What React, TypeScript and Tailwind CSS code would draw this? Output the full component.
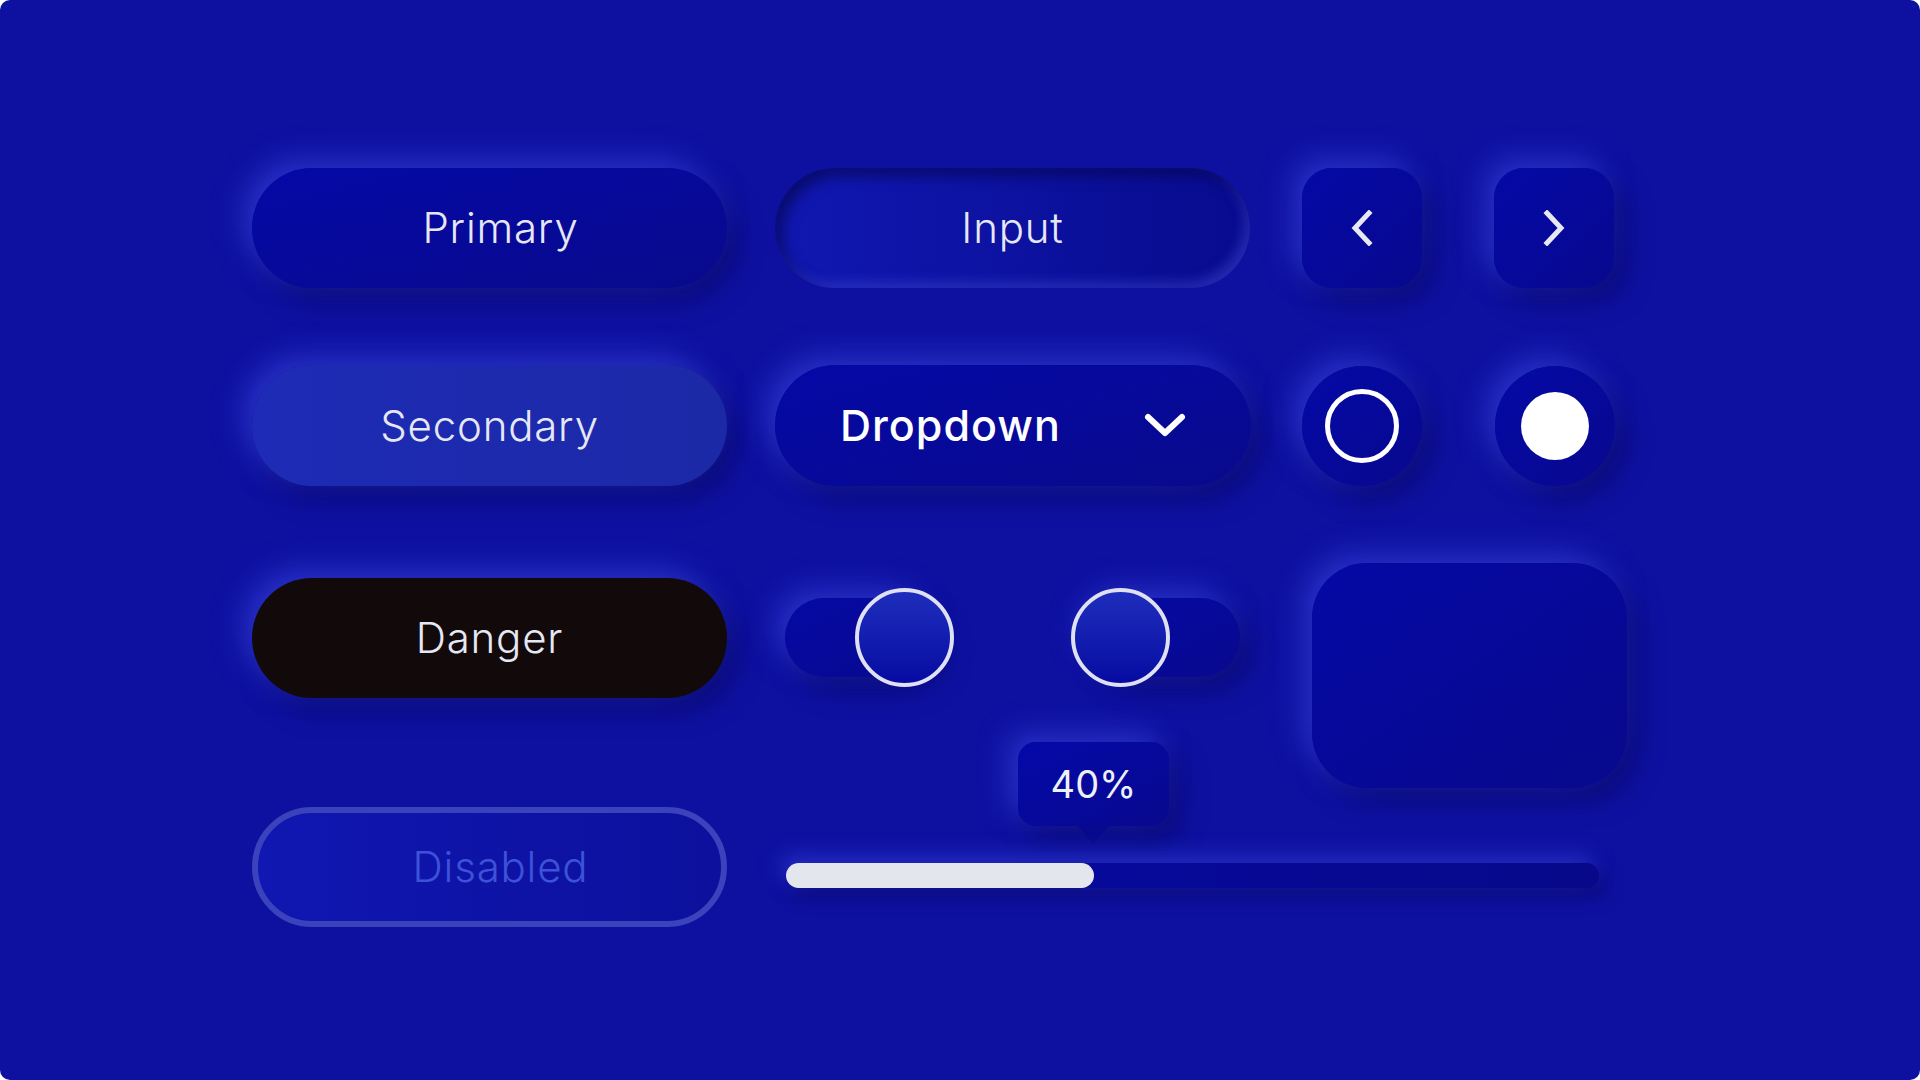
import React from "react";

const raised =
  "shadow-[-10px_-10px_28px_rgba(60,72,230,0.55),10px_12px_26px_rgba(8,8,90,0.55)]";
const label = "text-[42px] leading-none font-light tracking-[0.8px] text-[#e6e7f4]";

function ChevronLeft() {
  return (
    <svg width="24" height="36" viewBox="0 0 24 36" fill="none">
      <polyline points="19,3 5,18 19,33" stroke="#e8e8f2" strokeWidth="5" strokeLinecap="square" />
    </svg>
  );
}

function ChevronRight() {
  return (
    <svg width="24" height="36" viewBox="0 0 24 36" fill="none">
      <polyline points="5,3 19,18 5,33" stroke="#e8e8f2" strokeWidth="5" strokeLinecap="square" />
    </svg>
  );
}

function Toggle({ knobLeft }: { knobLeft: number }) {
  return (
    <div className={`relative h-[79px] w-[150px] rounded-full bg-gradient-to-br from-[#0609a4] to-[#07098e] ${raised}`}>
      <div
        className="absolute top-[-10px] h-[99px] w-[99px] rounded-full border-4 border-[#dfe0f2] bg-gradient-to-b from-[#1e2cbc] to-[#0709a2]"
        style={{ left: knobLeft }}
      />
    </div>
  );
}

export default function App() {
  return (
    <div className="bg-white" style={{ fontFamily: "Inter, 'Noto Sans', sans-serif" }}>
      <div className="h-[1080px] w-[1920px] overflow-hidden rounded-[10px] bg-[#0e11a0]">
        <div className="flex pl-[252px] pt-[168px]">
          {/* left column: buttons */}
          <div className="flex w-[475px] flex-col">
            <button className={`flex h-[120px] items-center justify-center rounded-full bg-gradient-to-br from-[#0508a6] to-[#080a8c] pl-[22px] ${raised}`}>
              <span className={label}>Primary</span>
            </button>
            <button className={`mt-[77px] flex h-[121px] items-center justify-center rounded-full bg-gradient-to-r from-[#1d2bb6] to-[#1c29a6] ${raised}`}>
              <span className={label}>Secondary</span>
            </button>
            <button className={`mt-[92px] flex h-[120px] items-center justify-center rounded-full bg-[#120a0a] ${raised}`}>
              <span className={label}>Danger</span>
            </button>
            <button className="mt-[109px] flex h-[120px] items-center justify-center rounded-full border-[6px] border-[#3a42bc] bg-gradient-to-r from-[#1017b2] to-[#0c109c] pl-[22px]">
              <span className="text-[42px] font-light leading-none tracking-[0.8px] text-[#3d52d8]">Disabled</span>
            </button>
          </div>

          {/* middle + right */}
          <div className="ml-[48px] flex flex-col">
            <div className="flex items-center">
              <div className="flex h-[120px] w-[475px] items-center justify-center rounded-full bg-gradient-to-r from-[#1118b2] to-[#080b8e] shadow-[inset_8px_8px_14px_rgba(5,6,80,0.65),inset_-6px_-6px_12px_rgba(70,80,220,0.45)]">
                <span className={label}>Input</span>
              </div>
              <button className={`ml-[52px] flex h-[120px] w-[120px] items-center justify-center rounded-[30px] bg-gradient-to-br from-[#0508a6] to-[#07098e] ${raised}`}>
                <ChevronLeft />
              </button>
              <button className={`ml-[72px] flex h-[120px] w-[120px] items-center justify-center rounded-[30px] bg-gradient-to-br from-[#0508a6] to-[#07098e] ${raised}`}>
                <ChevronRight />
              </button>
            </div>

            <div className="mt-[77px] flex items-center">
              <button className={`flex h-[121px] w-[476px] items-center justify-between rounded-full bg-gradient-to-br from-[#0508a6] to-[#080a8c] pl-[65px] pr-[64px] ${raised}`}>
                <span className="text-[43px] font-medium leading-none tracking-[1px] text-white">Dropdown</span>
                <svg width="44" height="28" viewBox="0 0 44 28" fill="none">
                  <polyline points="5,5 22,21 39,5" stroke="#ffffff" strokeWidth="6" strokeLinecap="round" strokeLinejoin="round" />
                </svg>
              </button>
              <div className={`ml-[51px] flex h-[120px] w-[120px] items-center justify-center rounded-full bg-gradient-to-br from-[#0508a6] to-[#07098e] ${raised}`}>
                <div className="h-[74px] w-[74px] rounded-full border-[5px] border-white" />
              </div>
              <div className={`ml-[73px] flex h-[120px] w-[120px] items-center justify-center rounded-full bg-gradient-to-br from-[#0508a6] to-[#07098e] ${raised}`}>
                <div className="h-[68px] w-[68px] rounded-full bg-white" />
              </div>
            </div>

            <div className="mt-[77px] flex items-start">
              <div className="flex w-[537px] flex-col">
                <div className="flex pl-[10px] pt-[35px]">
                  <Toggle knobLeft={70} />
                  <div className="ml-[155px]">
                    <Toggle knobLeft={-19} />
                  </div>
                </div>
                <div className="ml-[243px] mt-[65px] flex w-[151px] flex-col items-center">
                  <div className={`flex h-[84px] w-[151px] items-center justify-center rounded-[18px] bg-gradient-to-br from-[#0508a8] to-[#07098e] ${raised}`}>
                    <span className="text-[38px] font-normal leading-none text-[#eef0f8]">40%</span>
                  </div>
                  <div className="h-0 w-0 border-l-[15px] border-r-[16px] border-t-[17px] border-l-transparent border-r-transparent border-t-[#07098e]" />
                </div>
              </div>
              <div className={`h-[225px] w-[315px] rounded-[55px] bg-gradient-to-br from-[#0508a4] to-[#07098c] ${raised}`} />
            </div>

            <div className="ml-[11px] mt-[20px] flex h-[25px] w-[813px] rounded-full bg-gradient-to-r from-[#0609a4] to-[#07098a] shadow-[-6px_-8px_20px_rgba(60,72,230,0.5),6px_8px_18px_rgba(8,8,90,0.5)]">
              <div className="h-[25px] w-[308px] rounded-full bg-[#e4e6ee]" />
            </div>
          </div>
        </div>
      </div>
    </div>
  );
}
